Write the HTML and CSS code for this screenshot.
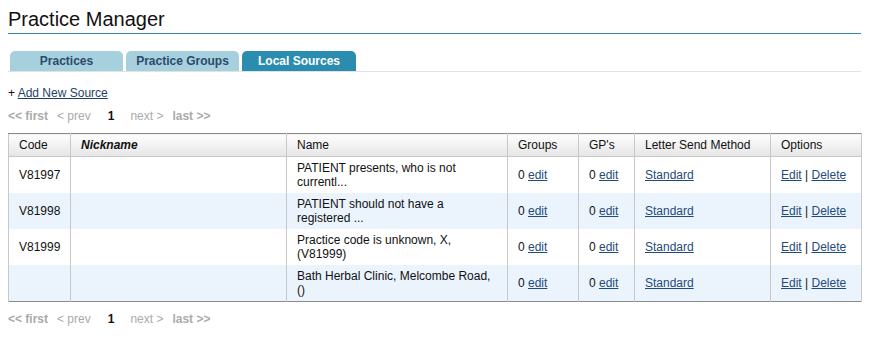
FILE: index.html
```html
<!DOCTYPE html>
<html>
<head>
<meta charset="utf-8">
<link rel="stylesheet" href="styles.css">
</head>
<body>
<div class="page">
  <h1 class="title">Practice Manager</h1>
  <div class="tabs">
    <a class="tab" href="#">Practices</a>
    <a class="tab" href="#">Practice Groups</a>
    <a class="tab active" href="#">Local Sources</a>
  </div>
  <div class="add">+ <a href="#">Add New Source</a></div>
  <div class="pager">
    <span class="pb">&lt;&lt; first</span>
    <span>&lt; prev</span>
    <span class="cur">1</span>
    <span>next &gt;</span>
    <span class="pb">last &gt;&gt;</span>
  </div>
  <table class="grid">
    <colgroup>
      <col class="c-code"><col class="c-nick"><col class="c-name"><col class="c-groups"><col class="c-gps"><col class="c-letter"><col class="c-opt">
    </colgroup>
    <thead>
      <tr><th>Code</th><th class="nick">Nickname</th><th>Name</th><th>Groups</th><th>GP's</th><th>Letter Send Method</th><th>Options</th></tr>
    </thead>
    <tbody>
      <tr><td>V81997</td><td></td><td>PATIENT presents, who is not currentl...</td><td>0 <a href="#">edit</a></td><td>0 <a href="#">edit</a></td><td><a href="#">Standard</a></td><td><a href="#">Edit</a> | <a href="#">Delete</a></td></tr>
      <tr class="alt"><td>V81998</td><td></td><td>PATIENT should not have a registered ...</td><td>0 <a href="#">edit</a></td><td>0 <a href="#">edit</a></td><td><a href="#">Standard</a></td><td><a href="#">Edit</a> | <a href="#">Delete</a></td></tr>
      <tr><td>V81999</td><td></td><td>Practice code is unknown, X, (V81999)</td><td>0 <a href="#">edit</a></td><td>0 <a href="#">edit</a></td><td><a href="#">Standard</a></td><td><a href="#">Edit</a> | <a href="#">Delete</a></td></tr>
      <tr class="alt"><td></td><td></td><td>Bath Herbal Clinic, Melcombe Road, ()</td><td>0 <a href="#">edit</a></td><td>0 <a href="#">edit</a></td><td><a href="#">Standard</a></td><td><a href="#">Edit</a> | <a href="#">Delete</a></td></tr>
    </tbody>
  </table>
  <div class="pager bottom">
    <span class="pb">&lt;&lt; first</span>
    <span>&lt; prev</span>
    <span class="cur">1</span>
    <span>next &gt;</span>
    <span class="pb">last &gt;&gt;</span>
  </div>
</div>
</body>
</html>
```
FILE: styles.css
```css
html, body { margin: 0; padding: 0; background: #fff; }
body { font-family: "Liberation Sans", Arial, sans-serif; font-size: 12px; color: #111; }
.page { padding: 0 10px 0 8px; }
.title {
  margin: 0; padding: 8px 0 3px 0;
  font-size: 20px; font-weight: normal; line-height: 22px; color: #111;
  border-bottom: 1px solid #3a85a6;
}
.tabs {
  display: flex; gap: 3px; margin-top: 17px; padding-left: 2px;
  border-bottom: 1px solid #e2e2e2;
}
.tab {
  width: 113px; height: 20px; line-height: 20px; text-align: center;
  background: #a6d0de; color: #2b4b6b; font-weight: bold; font-size: 12px;
  text-decoration: none; border-radius: 5px 5px 0 0;
}
.tab.active { background: #2a8db0; color: #fff; width: 114px; }
.add { margin-top: 14px; line-height: 14px; }
.add a { color: #1f3f66; }
.pager { margin-top: 9px; line-height: 14px; color: #aaa; display: flex; }
.pager span { margin-right: 9px; }
.pager .pb { font-weight: bold; }
.pager .cur { color: #111; font-weight: bold; margin: 0 16px 0 8px; }
.pager.bottom { margin-top: 10px; }
.grid {
  margin-top: 10px; width: 853px; border-collapse: collapse; table-layout: fixed;
  border: 1px solid #8a8a8a;
}
.c-code { width: 62px; } .c-nick { width: 216px; } .c-name { width: 221px; }
.c-groups { width: 71px; } .c-gps { width: 56px; } .c-letter { width: 136px; } .c-opt { width: 91px; }
.grid th {
  height: 22px; padding: 0 10px; text-align: left; font-weight: normal;
  background: linear-gradient(#fdfdfd, #e6e6e6);
  border: 1px solid #c8c8c8; border-top-color: #8a8a8a;
}
.grid th.nick { font-weight: bold; font-style: italic; }
.grid td {
  height: 36px; padding: 0 10px; line-height: 14px;
  border-left: 1px solid #c8c8c8; border-right: 1px solid #c8c8c8;
}
.grid tr.alt td { background: #ebf4fd; }
.grid td a { color: #1f4b7a; }
```
